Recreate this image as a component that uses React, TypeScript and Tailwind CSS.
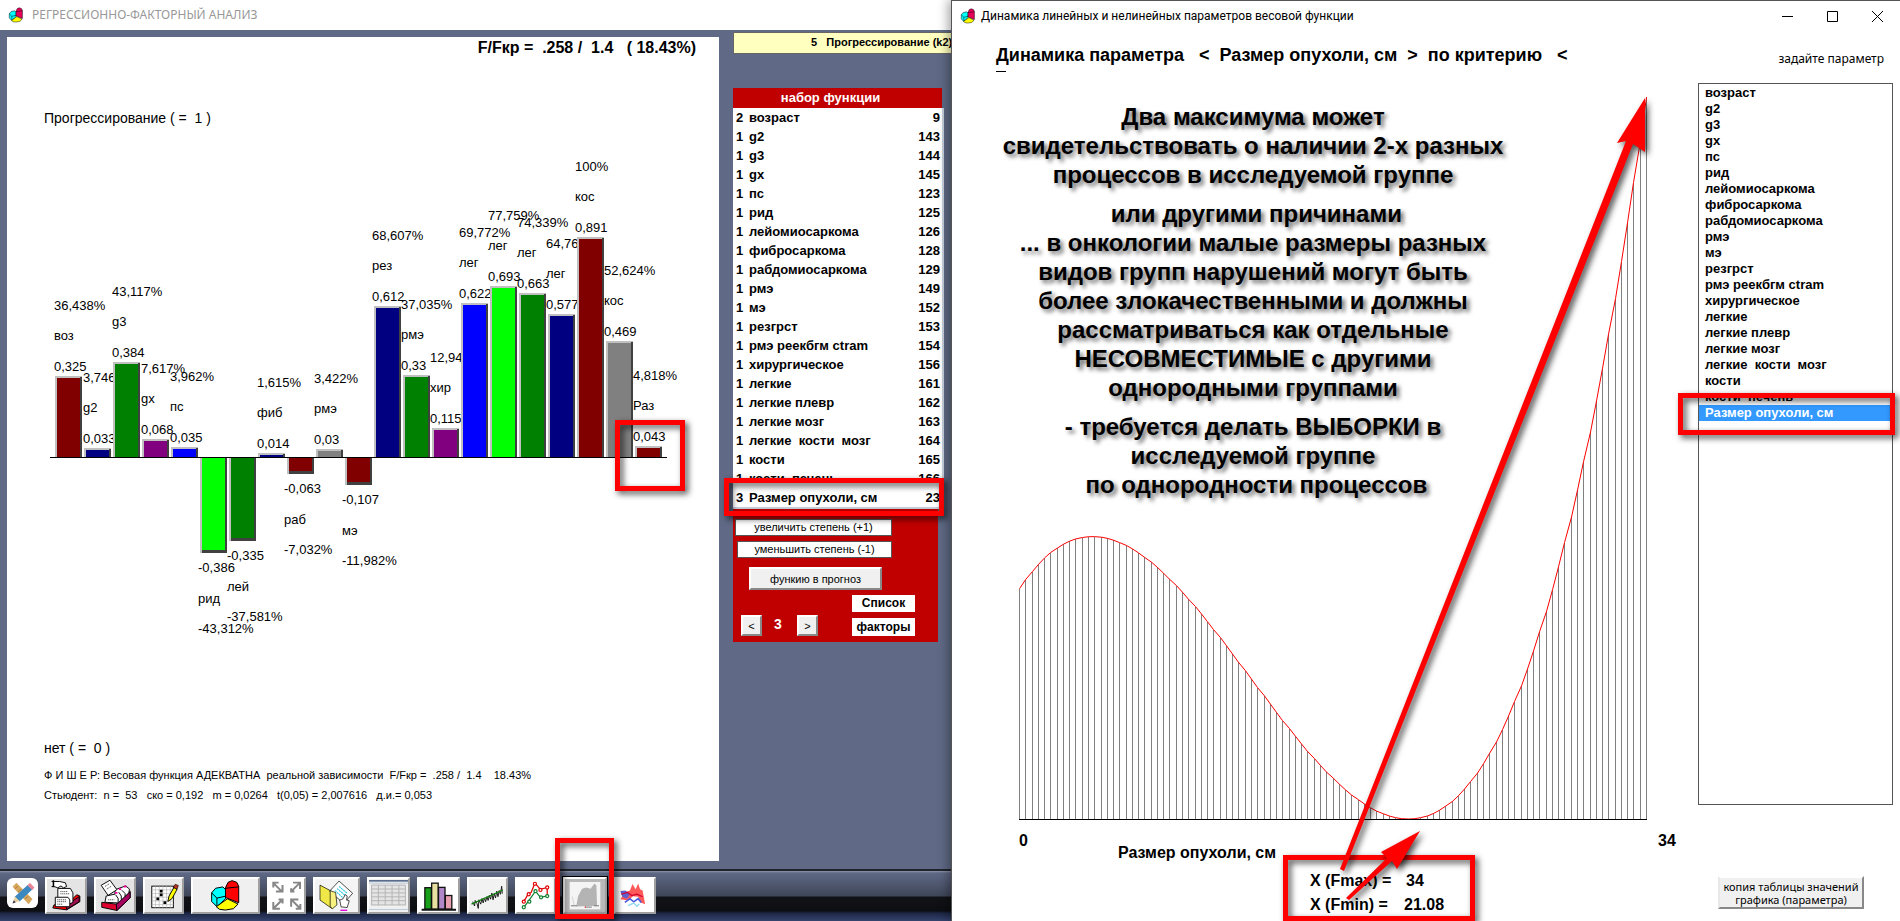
import type { ReactNode } from 'react';

type Factor = { degree: number; name: string; id: number };

const factors: Factor[] = [
  { degree: 2, name: 'возраст', id: 9 },
  { degree: 1, name: 'g2', id: 143 },
  { degree: 1, name: 'g3', id: 144 },
  { degree: 1, name: 'gx', id: 145 },
  { degree: 1, name: 'пс', id: 123 },
  { degree: 1, name: 'рид', id: 125 },
  { degree: 1, name: 'лейомиосаркома', id: 126 },
  { degree: 1, name: 'фибросаркома', id: 128 },
  { degree: 1, name: 'рабдомиосаркома', id: 129 },
  { degree: 1, name: 'рмэ', id: 149 },
  { degree: 1, name: 'мэ', id: 152 },
  { degree: 1, name: 'резгрст', id: 153 },
  { degree: 1, name: 'рмэ реекбгм ctram', id: 154 },
  { degree: 1, name: 'хирургическое', id: 156 },
  { degree: 1, name: 'легкие', id: 161 },
  { degree: 1, name: 'легкие плевр', id: 162 },
  { degree: 1, name: 'легкие мозг', id: 163 },
  { degree: 1, name: 'легкие\u00a0 кости\u00a0 мозг', id: 164 },
  { degree: 1, name: 'кости', id: 165 },
  { degree: 1, name: 'кости\u00a0 печень', id: 166 },
  { degree: 3, name: 'Размер опухоли, см', id: 23 },
];

const MAROON = '#800000';
const NAVY = '#000080';
const GREEN = '#008000';
const PURPLE = '#800080';
const BLUE = '#0000ff';
const LIME = '#00ff00';
const GRAY = '#808080';

// edge: y of the free end of the bar, the other end sits on the axis
const bars = [
  { name: 'воз', value: '0,325', percent: '36,438%', edge: 376, color: MAROON },
  { name: 'g2', value: '0,033', percent: '3,746%', edge: 448, color: NAVY },
  { name: 'g3', value: '0,384', percent: '43,117%', edge: 362, color: GREEN },
  { name: 'gx', value: '0,068', percent: '7,617%', edge: 439, color: PURPLE },
  { name: 'пс', value: '0,035', percent: '3,962%', edge: 447, color: BLUE },
  { name: 'рид', value: '-0,386', percent: '-43,312%', edge: 553, color: LIME },
  { name: 'лей', value: '-0,335', percent: '-37,581%', edge: 541, color: GREEN },
  { name: 'фиб', value: '0,014', percent: '1,615%', edge: 453, color: NAVY },
  { name: 'раб', value: '-0,063', percent: '-7,032%', edge: 474, color: MAROON },
  { name: 'рмэ', value: '0,03', percent: '3,422%', edge: 449, color: GRAY },
  { name: 'мэ', value: '-0,107', percent: '-11,982%', edge: 485, color: MAROON },
  { name: 'рез', value: '0,612', percent: '68,607%', edge: 306, color: NAVY },
  { name: 'рмэ', value: '0,33', percent: '37,035%', edge: 375, color: GREEN },
  { name: 'хир', value: '0,115', percent: '12,941%', edge: 428, color: PURPLE },
  { name: 'лег', value: '0,622', percent: '69,772%', edge: 303, color: BLUE },
  { name: 'лег', value: '0,693', percent: '77,759%', edge: 286, color: LIME },
  { name: 'лег', value: '0,663', percent: '74,339%', edge: 293, color: GREEN },
  { name: 'лег', value: '0,577', percent: '64,767%', edge: 314, color: NAVY },
  { name: 'кос', value: '0,891', percent: '100%', edge: 237, color: MAROON },
  { name: 'кос', value: '0,469', percent: '52,624%', edge: 341, color: GRAY },
  { name: 'Раз', value: '0,043', percent: '4,818%', edge: 446, color: MAROON },
];

const AXIS = 457;

function Highlight({ className }: { className: string }) {
  return (
    <div
      className={`pointer-events-none absolute z-10 border-[5px] border-[#ff0000] drop-shadow-[3px_3px_3px_rgba(0,0,0,0.7)] ${className}`}
    />
  );
}

function PieIcon({ className, red = '#ff0000' }: { className: string; red?: string }) {
  return (
    <svg viewBox="0 0 100 100" className={className} stroke="#000" strokeWidth="3" strokeLinejoin="round">
      <path d="M8 42 L20 28 L42 24 L50 32 L50 60 L24 84 L8 68 Z" fill="#00ffff" />
      <path d="M8 42 L24 58 L50 52 M24 58 V84" fill="none" />
      <path d="M50 26 L58 10 L70 5 L84 10 L90 22 V72 L50 56 Z" fill={red} />
      <path d="M50 28 L90 24" fill="none" />
      <path d="M22 84 L56 60 L88 76 L74 90 L50 94 L32 92 Z" fill="#ffff00" />
    </svg>
  );
}

/* ── BAR CHART ── */
function BarChart() {
  return (
    <svg
      viewBox="7 128 712 610"
      width="712"
      height="610"
      className="block font-['Liberation_Sans',sans-serif] text-[13px]"
    >
      {bars.map((bar, i) => {
        const x = 55 + i * 29;
        const labelX = Math.round(54 + i * 28.93);
        if (bar.edge < AXIS) {
          return (
            <g key={i}>
              <rect x={x} y={bar.edge} width="27" height={AXIS - bar.edge} fill="#c0c0c0" />
              <rect x={x + 25} y={bar.edge + 1} width="2" height={AXIS - bar.edge - 1} fill="#404040" />
              <rect x={x + 2} y={bar.edge + 2} width="23" height={AXIS - bar.edge - 2} fill={bar.color} />
              <text x={labelX} y={bar.edge - 5}>{bar.value}</text>
              <text x={labelX} y={bar.edge - 36}>{bar.name}</text>
              <text x={labelX} y={bar.edge - 66}>{bar.percent}</text>
            </g>
          );
        }
        return (
          <g key={i}>
            <rect x={x} y={AXIS} width="27" height={bar.edge - AXIS} fill="#404040" />
            <rect x={x} y={AXIS} width="2" height={bar.edge - AXIS} fill="#c0c0c0" />
            <rect x={x + 2} y={AXIS} width="23" height={bar.edge - AXIS - 3} fill={bar.color} />
            <text x={labelX - 1} y={bar.edge + 19}>{bar.value}</text>
            <text x={labelX - 1} y={bar.edge + 50}>{bar.name}</text>
            <text x={labelX - 1} y={bar.edge + 80}>{bar.percent}</text>
          </g>
        );
      })}
      <rect x="50" y={AXIS} width="617" height="1" />
    </svg>
  );
}

/* ── TOOLBAR ── */
const ACTIVE_TOOL = 'Динамика параметра';

const tools: { label: string; width: string; face: string; icon: ReactNode }[] = [
  {
    label: 'Картотека',
    width: 'w-[42px]',
    face: 'bg-[#e4e4e4]',
    icon: (
      <svg viewBox="0 0 120 108" className="h-[34px] w-[38px]" stroke="#000" strokeWidth="3">
        <path d="M18 92 L62 98 L104 72 V54 L94 50 L60 84 L22 82 Z" fill="#ff0000" />
        <path d="M60 84 L102 56 V72 L62 97 Z" fill="#a01050" />
        <path d="M34 30 H74 L82 44 V74 L66 82 H34 Z" fill="#fff" />
        <path d="M26 58 H66 L72 66 V88 H26 Z" fill="#fff" />
        <path d="M32 66 H60 M32 72 H62 M32 80 H48 M42 40 H66 M42 47 H70" strokeDasharray="4 2" strokeWidth="2" fill="none" />
        <path d="M14 8 H40 L58 12 L62 24 L52 28 L44 22 L34 28 L22 24 H14" fill="#fff" />
        <path d="M20 4 V26" fill="none" strokeWidth="5" />
      </svg>
    ),
  },
  {
    label: 'Архив',
    width: 'w-[42px]',
    face: 'bg-[#e4e4e4]',
    icon: (
      <svg viewBox="0 0 120 108" className="h-[34px] w-[38px]" stroke="#000" strokeWidth="3" strokeLinejoin="round">
        <path d="M18 74 L64 80 L108 40 V60 L66 100 L18 90 Z" fill="#e00030" />
        <path d="M64 80 L108 40 V60 L66 100 Z" fill="#a80060" />
        <path d="M60 34 L94 22 L106 32 L104 44 L70 76 L28 74 L32 54 L60 48 Z" fill="#fff" />
        <path d="M62 50 L70 62 V76 M72 42 L80 54 V66 M82 36 L92 46 V56" fill="none" />
        <path d="M16 20 L44 4 L66 34 L38 52 Z" fill="#fff" />
        <path d="M28 24 L42 15 M34 32 L48 23 M38 66 H58" strokeWidth="2" strokeDasharray="4 2" />
        <path d="M60 44 h8 M72 32 h8 M88 24 h8" stroke="#ff00a0" strokeWidth="6" />
      </svg>
    ),
  },
  {
    label: 'Таблица данных',
    width: 'w-[41px]',
    face: 'bg-[#e8e8e8]',
    icon: (
      <svg viewBox="0 0 120 108" className="h-[34px] w-[38px]">
        <rect x="22" y="22" width="70" height="70" fill="#fff" stroke="#000" strokeWidth="3" />
        <path
          d="M34 22V92M46 22V92M58 22V92M70 22V92M82 22V92M22 34H92M22 46H92M22 58H92M22 70H92M22 82H92"
          stroke="#b0b0b0"
          strokeWidth="2"
        />
        <path d="M48 34h9v9h-9zM48 46h9v9h-9zM37 59h9v9h-9zM60 71h9v9h-9z" />
        <path d="M94 26 L104 32 L88 62 L74 72 L78 54 Z" fill="#ffff00" stroke="#000" strokeWidth="3" />
        <path d="M92 26 L98 16 L108 20 L104 32 Z" fill="#c03020" stroke="#000" strokeWidth="2" />
      </svg>
    ),
  },
  { label: 'Диаграмма', width: 'w-[69px]', face: 'bg-[#f0f0f0]', icon: <PieIcon className="size-[33px]" /> },
  {
    label: 'Развернуть',
    width: 'w-[39px]',
    face: 'bg-white',
    icon: (
      <svg viewBox="0 0 100 100" className="h-[33px] w-[33px]" fill="none" stroke="#868686" strokeWidth="6">
        <path d="M12 14 L34 36 M18 38 H38 V18 M10 26 V11 H26" />
        <path d="M66 36 L88 14 M70 11 H91 V30 M64 28 V38 H74" />
        <path d="M34 66 L12 88 M10 70 V90 H30 M26 62 H38 V74" />
        <path d="M90 88 L66 64 M64 84 V62 H86 M92 76 V90 H78" />
      </svg>
    ),
  },
  {
    label: 'Открыть документ',
    width: 'w-[47px]',
    face: 'bg-[#f4f4f4]',
    icon: (
      <svg viewBox="0 0 120 100" className="h-[34px] w-[42px]" stroke="#000" strokeWidth="2">
        <path d="M10 18 L40 34 L56 26 V70 L44 86 L10 62 Z" fill="#f0e848" />
        <path d="M38 36 L66 6 L106 42 L80 72 Z" fill="#fff" />
        <path d="M54 34 L76 54 M60 28 L84 48 M66 22 L90 42" stroke="#20c8e0" strokeWidth="3" strokeDasharray="6 2" />
        <path d="M40 34 L56 40 L60 76 L46 88 L40 80 Z" fill="#f8f080" />
        <path d="M72 82 L68 62 L78 58 L84 46 L90 50 L88 62 L96 64 L90 84 Z" fill="#fff" />
        <path d="M70 92 H90" stroke="#e000e0" strokeWidth="4" />
      </svg>
    ),
  },
  {
    label: 'Сетка',
    width: 'w-[43px]',
    face: 'bg-[#f0f0f0]',
    icon: (
      <svg viewBox="0 0 120 100" className="h-[33px] w-[39px]">
        <path d="M0 5 H120" stroke="#26406a" strokeWidth="4" />
        <path d="M0 12 H120 M0 93 H120" stroke="#b8c8d8" strokeWidth="3" />
        <rect x="8" y="18" width="104" height="62" fill="#e4e4e4" />
        <path
          d="M8 18H112M8 30H112M8 42H112M8 54H112M8 66H112M8 79H112M8 18V80M29 18V80M50 18V80M71 18V80M92 18V80M112 18V80"
          stroke="#b4b4b4"
          strokeWidth="3"
        />
      </svg>
    ),
  },
  {
    label: 'Гистограмма',
    width: 'w-[43px]',
    face: 'bg-white',
    icon: (
      <svg viewBox="0 0 120 100" className="h-[33px] w-[39px]" stroke="#111" strokeWidth="4">
        <rect x="18" y="26" width="20" height="66" fill="#18a018" />
        <rect x="39" y="12" width="20" height="80" fill="#e8e0a0" />
        <rect x="60" y="25" width="20" height="67" fill="#b088c8" />
        <rect x="81" y="50" width="20" height="42" fill="#e8a0b0" />
        <path d="M8 94 H114" strokeWidth="6" />
      </svg>
    ),
  },
  {
    label: 'Временной ряд',
    width: 'w-[41px]',
    face: 'bg-[#f2f2f2]',
    icon: (
      <svg viewBox="0 0 120 100" className="h-[33px] w-[37px]" fill="none">
        <path
          d="M12 70L18 84L20 66L26 76L30 92L32 64L38 78L42 60L46 74L50 58L54 70L58 54L62 66L66 50L70 62L74 42L78 64L82 44L86 58L90 36L94 54L98 34L102 46L106 20L108 44"
          stroke="#111"
          strokeWidth="3"
        />
        <path d="M8 78 L110 32" stroke="#108010" strokeWidth="4" />
      </svg>
    ),
  },
  {
    label: 'Линии',
    width: 'w-[41px]',
    face: 'bg-white',
    icon: (
      <svg viewBox="0 0 120 100" className="h-[33px] w-[37px]" fill="#fff" strokeWidth="4">
        <path d="M24 86 L36 70 L60 36 L76 56 L96 52" fill="none" stroke="#108030" />
        <path d="M22 70 L36 46 L46 40 L58 10 L76 30 L98 24 V50" fill="none" stroke="#e00000" />
        <g stroke="#108030">
          <circle cx="22" cy="88" r="5" /><circle cx="40" cy="70" r="5" /><circle cx="60" cy="36" r="5" />
          <circle cx="78" cy="56" r="5" /><circle cx="98" cy="52" r="5" />
        </g>
        <g stroke="#e00000">
          <circle cx="22" cy="70" r="5" /><circle cx="38" cy="46" r="5" /><circle cx="58" cy="12" r="5" />
          <circle cx="76" cy="32" r="5" /><circle cx="98" cy="24" r="5" />
        </g>
      </svg>
    ),
  },
  {
    label: ACTIVE_TOOL,
    width: 'w-[44px]',
    face: 'bg-[#b8b8b8] outline outline-black',
    icon: (
      <svg viewBox="0 0 110 92" className="h-[30px] w-[36px]">
        <rect x="8" y="3" width="94" height="84" fill="#f4f4f4" />
        <path d="M28 78 L34 46 L46 24 L58 20 L72 24 L84 8 L90 14 L92 76 Z" fill="#b4b4b4" />
        <path d="M16 48 L22 76" stroke="#c0c0c0" strokeWidth="2" />
        <path d="M12 76 h18 M82 76 h16 M56 80 h20" stroke="#777" strokeWidth="3" />
        <path d="M54 80 h4" stroke="#e00" strokeWidth="3" />
      </svg>
    ),
  },
  {
    label: 'Поверхность',
    width: 'w-[42px]',
    face: 'bg-white',
    icon: (
      <svg viewBox="0 0 120 100" className="h-[33px] w-[38px]" fill="none">
        <path d="M14 62 L28 40 L44 34 L52 14 L62 30 L70 12 L76 30 L84 34 L92 78 L78 72 L70 54 L54 52 L38 66 Z" fill="#ff5a5a" />
        <path d="M14 36 L30 34 L44 46 L34 60 L20 54 Z" fill="#6060d0" />
        <path d="M16 46 L36 40 L50 50 L66 46 L84 54" stroke="#d00030" strokeWidth="4" />
        <path d="M28 72 L44 60 L56 70 L70 60 L80 72" stroke="#4858e0" strokeWidth="5" />
        <path d="M38 82 L56 74 L66 84 L74 76" stroke="#90d8f0" strokeWidth="4" />
      </svg>
    ),
  },
];

function Toolbar() {
  return (
    <div className="flex h-[52px] shrink-0 gap-[7px] border-t-2 border-[#20242c] bg-[linear-gradient(#8f96aa_0px,#5f6985_2px,#3f4659_25px,#111317_26px,#0c0e12_40px,#1c2644_42px,#35436e_50px)] pt-[6px] pl-[7px]">
      <button aria-label="Инструменты" className="mt-px flex h-[30px] w-[31px] items-center justify-center rounded-md bg-white">
        <svg viewBox="0 0 90 90" className="size-[29px]">
          <path d="M14 24 L26 12 L76 62 L64 78 Z" fill="#d8a860" />
          <path d="M30 22 l-8 8 M40 32 l-8 8 M62 54 l-8 8" stroke="#a87830" strokeWidth="3" />
          <path d="M62 18 L76 32 L36 70 L20 56 Z" fill="#3c88c0" />
          <path d="M60 20 L68 12 L82 26 L76 34 Z" fill="#e88898" />
          <path d="M22 54 L36 68 L14 76 Z" fill="#e8d0a0" />
          <path d="M18 66 L24 72 L14 76 Z" fill="#303050" />
        </svg>
      </button>
      {tools.map((tool) => (
        <div key={tool.label} className="relative">
          <button
            aria-label={tool.label}
            className={`flex h-[37px] items-center justify-center border-2 border-t-white border-r-[#a0a0a0] border-b-[#a0a0a0] border-l-white ${tool.width} ${tool.face}`}
          >
            {tool.icon}
          </button>
          {tool.label === ACTIVE_TOOL && <Highlight className="-top-[39px] -left-2 h-[81px] w-[59px]" />}
        </div>
      ))}
    </div>
  );
}

/* ── FUNCTION SET ── */
function FunctionSet() {
  return (
    <div className="relative mt-[34px] w-[211px] text-[13px]">
      <div className="w-[209px] bg-[#c00000] pr-[14px] text-center leading-5 font-bold text-white">набор функции</div>
      <table className="w-full border-r-2 border-b-2 border-[#c8d0dc] bg-white font-bold">
        <tbody>
          {factors.map((f) => (
            <tr key={f.id} className="h-[19px] leading-[19px]">
              <td className="w-4 pl-[3px]">{f.degree}</td>
              <td>{f.name}</td>
              <td className="pr-[2px] text-right">{f.id}</td>
            </tr>
          ))}
        </tbody>
      </table>
      <div className="w-[205px] bg-[#c00000] px-[2px] pt-[10px] pb-[6px]">
        <button className="block h-[17px] w-[157px] border border-[#555] bg-white text-center text-[11px] leading-[15px]">
          увеличить степень (+1)
        </button>
        <button className="mt-[5px] ml-[2px] block h-[17px] w-[155px] border border-[#555] bg-white text-center text-[11px] leading-[15px]">
          уменьшить степень (-1)
        </button>
        <button className="mt-[9px] ml-[14px] block h-[23px] w-[133px] border-2 border-t-white border-r-[#888] border-b-[#888] border-l-white bg-[#f0f0f0] text-center text-[11px] leading-[18px]">
          функию в прогноз
        </button>
        <div className="mt-[5px] flex items-end">
          <button className="ml-[6px] h-[21px] w-[21px] border-2 border-t-white border-r-[#888] border-b-[#888] border-l-white bg-[#f0f0f0] text-center text-[11px] leading-4">
            &lt;
          </button>
          <span className="w-[35px] pr-[3px] text-center text-[14px] leading-6 font-bold text-white">3</span>
          <button className="h-[21px] w-[21px] border-2 border-t-white border-r-[#888] border-b-[#888] border-l-white bg-[#f0f0f0] text-center text-[11px] leading-4">
            &gt;
          </button>
          <div className="ml-[34px] flex w-[63px] flex-col gap-[6px] text-[12px] font-bold">
            <button className="h-[17px] bg-white leading-[15px]">Список</button>
            <button className="h-[18px] bg-white leading-[16px]">факторы</button>
          </div>
        </div>
      </div>
      <Highlight className="top-[390px] -left-[9px] h-[38px] w-[220px]" />
    </div>
  );
}

function RegressionWindow() {
  return (
    <section className="flex min-w-0 flex-col overflow-hidden bg-[#606a86]">
      <header className="flex h-[30px] shrink-0 items-center gap-2 bg-white pb-px pl-2 font-['Noto_Sans',sans-serif] text-[12px] text-[#999]">
        <PieIcon className="size-4" red="#e8005a" />
        РЕГРЕССИОННО-ФАКТОРНЫЙ АНАЛИЗ
      </header>
      <div className="flex flex-1 gap-[14px] pl-[7px]">
        <div className="relative mt-[7px] mb-2 w-[712px] shrink-0 bg-white whitespace-pre">
          <div className="pr-[23px] text-right text-[16px] leading-[22px] font-bold">F/Fкр =  .258 /  1.4   ( 18.43%)</div>
          <div className="mt-[49px] pl-[37px] text-[14px] leading-5">Прогрессирование ( =  1 )</div>
          <BarChart />
          <div className="pl-[37px] text-[14px] leading-5">нет ( =  0 )</div>
          <div className="mt-[7px] pl-[37px] text-[11px] leading-5">
            Ф И Ш Е Р: Весовая функция АДЕКВАТНА  реальной зависимости  F/Fкр =  .258 /  1.4    18.43%
          </div>
          <div className="pl-[37px] text-[11px] leading-5">
            Стьюдент:  n =  53   ско = 0,192   m = 0,0264   t(0,05) = 2,007616   д.и.= 0,053
          </div>
          <Highlight className="top-[383px] left-[608px] h-[71px] w-[70px]" />
        </div>
        <div className="mt-[2px] min-w-0 flex-1">
          <div className="h-[22px] border border-r-0 border-[#666] bg-[#ffffc0] pl-[77px] text-[11px] leading-[19px] font-bold whitespace-pre">
            5   Прогрессирование (k2)
          </div>
          <FunctionSet />
        </div>
      </div>
      <Toolbar />
    </section>
  );
}

/* ── WEIGHT FUNCTION PLOT ── */
const X0 = 1019;
const BASE = 819;
const STEPS = 100;
const LENGTH = 627;

// cubic with its maximum at 73 and its zero minimum at 389
const heightAt = (x: number) => {
  const d = x - 389;
  return 0.0000537 * (d ** 3 / 3 + (316 * d ** 2) / 2);
};

const samples = Array.from({ length: STEPS + 1 }, (_, i) => {
  const dx = (i * LENGTH) / STEPS;
  return { x: X0 + Math.round(dx), y: BASE - heightAt(dx) };
});

function Plot() {
  return (
    <svg
      viewBox="952 83 746 838"
      width="746"
      height="838"
      className="block font-['Liberation_Sans',sans-serif] text-[16px] font-bold"
    >
      <g fill="#808080" shapeRendering="crispEdges">
        {samples.map((p) => (
          <rect key={p.x} x={p.x} y={p.y} width="1" height={BASE - p.y} />
        ))}
      </g>
      <polyline points={samples.map((p) => `${p.x + 0.5},${p.y}`).join(' ')} fill="none" stroke="#ff0000" />
      <rect x={X0} y={BASE} width="628" height="1" />
      <text x="1019" y="846">0</text>
      <text x="1658" y="846">34</text>
      <text x="1118" y="858">Размер опухоли, см</text>
      <text x="1310" y="886">X (Fmax) =</text>
      <text x="1406" y="886">34</text>
      <text x="1310" y="910">X (Fmin) =</text>
      <text x="1404" y="910">21.08</text>
    </svg>
  );
}

function Arrows() {
  return (
    <svg
      viewBox="952 83 746 838"
      width="746"
      height="838"
      className="pointer-events-none absolute top-0 left-0 z-20 drop-shadow-[3px_3px_3px_rgba(0,0,0,0.7)]"
      fill="#ff0000"
    >
      <path d="M1340 869 L1626 141 L1617 143 L1645 98 L1645 152 L1633 144 L1344 871 Z" />
      <path d="M1346 898 L1387 858 L1381 852 L1420 831 L1397 869 L1392 861 L1349 900 Z" />
    </svg>
  );
}

const notes = [
  ['Два максимума может', 'свидетельствовать о наличии 2-х разных', 'процессов в исследуемой группе'],
  [
    '\u00a0или другими причинами',
    '... в онкологии малые размеры разных',
    'видов групп нарушений могут быть',
    'более злокачественными и должны',
    'рассматриваться как отдельные',
    'НЕСОВМЕСТИМЫЕ с другими',
    'однородными группами',
  ],
  ['- требуется делать ВЫБОРКИ в', 'исследуемой группе', '\u00a0по однородности процессов'],
];

function DynamicsWindow() {
  return (
    <section className="z-20 flex min-w-0 flex-col border-t border-l border-[#555] bg-white shadow-[-3px_0_10px_rgba(0,0,0,0.35)]">
      <header className="flex h-[30px] items-center gap-[5px] pl-2 font-['Roboto',sans-serif] text-[12px]">
        <PieIcon className="size-4" red="#e8005a" />
        <h1 className="flex-1">Динамика линейных и нелинейных параметров весовой функции</h1>
        <div className="flex gap-[34px] pr-[17px]">
          <button aria-label="Свернуть">
            <svg viewBox="0 0 11 11" className="size-[11px]"><path d="M0 5.5H11" stroke="#000" /></svg>
          </button>
          <button aria-label="Развернуть окно">
            <svg viewBox="0 0 11 11" className="size-[11px]"><path d="M.5 .5H10.5V10.5H.5Z" fill="none" stroke="#000" /></svg>
          </button>
          <button aria-label="Закрыть">
            <svg viewBox="0 0 11 11" className="size-[11px]"><path d="M0 0L11 11M11 0L0 11" stroke="#000" /></svg>
          </button>
        </div>
      </header>
      <div className="flex flex-1">
        <div className="w-[746px] shrink-0">
          <div className="h-[52px] pt-3 pl-[44px]">
            <h2 className="text-[18px] leading-6 font-bold whitespace-pre">
              Динамика параметра   &lt;  Размер опухоли, см  &gt;  по критерию   &lt;
            </h2>
            <div className="mt-1 h-px w-[10px] bg-black" />
          </div>
          <div className="relative">
            <Plot />
            <div className="absolute top-[19px] left-[40px] flex w-[522px] flex-col gap-[10px] text-center text-[24px] leading-[29px] font-bold whitespace-nowrap [text-shadow:3px_3px_4px_rgba(0,0,0,0.6)]">
              {notes.map((lines) => (
                <p key={lines[0]}>
                  {lines.map((line) => (
                    <span key={line} className="block">{line}</span>
                  ))}
                </p>
              ))}
            </div>
            <Highlight className="top-[772px] left-[331px] h-[66px] w-[192px]" />
            <Arrows />
          </div>
        </div>
        <aside className="flex flex-1 flex-col pr-[7px]">
          <label
            htmlFor="parameter"
            className="flex h-[52px] items-center justify-end pt-1 pr-[9px] font-['Noto_Sans',sans-serif] text-[12px]"
          >
            задайте параметр
          </label>
          <div className="relative">
            <select
              id="parameter"
              size={21}
              defaultValue="23"
              className="block h-[722px] w-full appearance-none overflow-hidden border border-[#555] bg-white bg-none p-0 pt-px text-[13px] font-bold outline-none"
            >
              {factors.map((f) => (
                <option
                  key={f.id}
                  value={f.id}
                  className="h-4 min-h-4 p-0 pl-[6px] leading-4 font-bold checked:bg-[linear-gradient(#3399ff,#3399ff)] checked:text-white"
                >
                  {f.name}
                </option>
              ))}
            </select>
            <Highlight className="top-[310px] -left-5 h-[42px] w-[217px]" />
          </div>
          <button className="mt-[71px] ml-5 h-[33px] w-[146px] border-2 border-t-white border-r-[#888] border-b-[#888] border-l-[#e8e8e8] bg-[#f0f0f0] font-['Noto_Sans',sans-serif] text-[11px] leading-[13px]">
            копия таблицы значений графика (параметра)
          </button>
        </aside>
      </div>
    </section>
  );
}

export default function App() {
  return (
    <main className="grid min-h-screen grid-cols-[951fr_949fr] overflow-hidden font-['Liberation_Sans',Arial,sans-serif] text-black">
      <RegressionWindow />
      <DynamicsWindow />
    </main>
  );
}
